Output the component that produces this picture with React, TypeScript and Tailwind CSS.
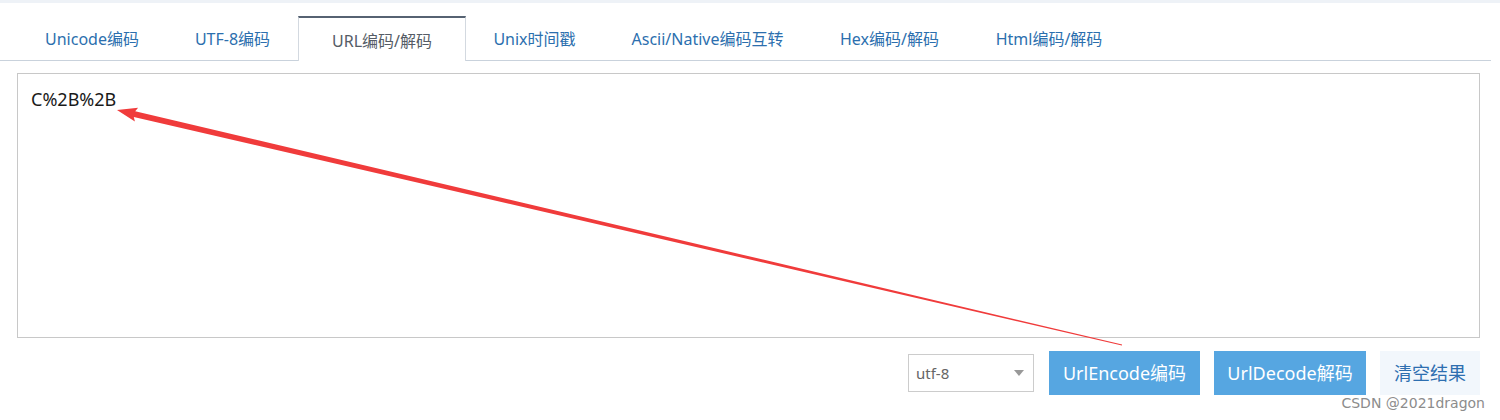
import React from "react";

const tabs = [
  { label: "Unicode编码", w: "w-[150px]" },
  { label: "UTF-8编码", w: "w-[131px]" },
  { label: "URL编码/解码", w: "w-[168px]", active: true },
  { label: "Unix时间戳", w: "w-[137px]" },
  { label: "Ascii/Native编码互转", w: "w-[209px]" },
  { label: "Hex编码/解码", w: "w-[155px]" },
  { label: "Html编码/解码", w: "w-[164px]" },
];

function Arrow() {
  return (
    <svg
      className="absolute left-0 top-0 pointer-events-none"
      width="1500"
      height="420"
      viewBox="0 0 1500 420"
    >
      <polygon
        points="117,110 138.1,107.8 135.2,111.2 1122.1,344.5 1121.9,345.5 133.8,117.0 134.9,121.4"
        fill="#f03b3b"
      />
    </svg>
  );
}

export default function App() {
  return (
    <div
      className="relative w-[1500px] h-[420px] bg-white overflow-hidden"
      style={{ fontFamily: '"Noto Sans", "Noto Sans CJK SC", sans-serif' }}
    >
      <div className="h-[3px] bg-[#eef2f7]" />
      <div className="w-[1491px] mt-[13px] flex h-[45px] border-b border-[#c9d2dc] pl-[17px]">
        {tabs.map((t) =>
          t.active ? (
            <div
              key={t.label}
              className={`${t.w} h-[45px] -mb-px flex items-center justify-center border-t-2 border-t-[#566272] border-x border-x-[#d3d9e0] bg-white text-[16px] text-[#555c66] pt-[2px]`}
            >
              {t.label}
            </div>
          ) : (
            <div
              key={t.label}
              className={`${t.w} h-[44px] flex items-center justify-center text-[16px] text-[#2c6fae] pt-[2px]`}
            >
              {t.label}
            </div>
          )
        )}
      </div>
      <div className="pl-[17px] mt-[12px]">
        <div className="w-[1463px] h-[265px] border border-[#c8c8c8] px-[13px] pt-[12px] text-[18px] text-[#1a1a1a] leading-[26px]">
          C%2B%2B
        </div>
      </div>
      <div className="flex justify-end items-center pr-[20px] mt-[13px] h-[44px]">
        <div className="w-[126px] h-[38px] border border-[#cccccc] flex items-center justify-between pl-[7px] pr-[9px] text-[15px] text-[#666]">
          <span>utf-8</span>
          <svg width="10" height="6" viewBox="0 0 10 6">
            <polygon points="0,0 10,0 5,6" fill="#999" />
          </svg>
        </div>
        <div className="ml-[15px] w-[151px] h-[44px] bg-[#56a6e1] text-white text-[18px] flex items-center justify-center">
          UrlEncode编码
        </div>
        <div className="ml-[14px] w-[152px] h-[44px] bg-[#56a6e1] text-white text-[18px] flex items-center justify-center">
          UrlDecode解码
        </div>
        <div className="ml-[14px] w-[100px] h-[44px] bg-[#f2f7fc] text-[#2e6fb0] text-[18px] flex items-center justify-center">
          清空结果
        </div>
      </div>
      <div
        className="absolute right-[15px] top-[395px] text-[14px] leading-[16px] text-[#8c8c8c]"
        style={{ fontFamily: '"DejaVu Sans", sans-serif' }}
      >
        CSDN @2021dragon
      </div>
      <Arrow />
    </div>
  );
}
